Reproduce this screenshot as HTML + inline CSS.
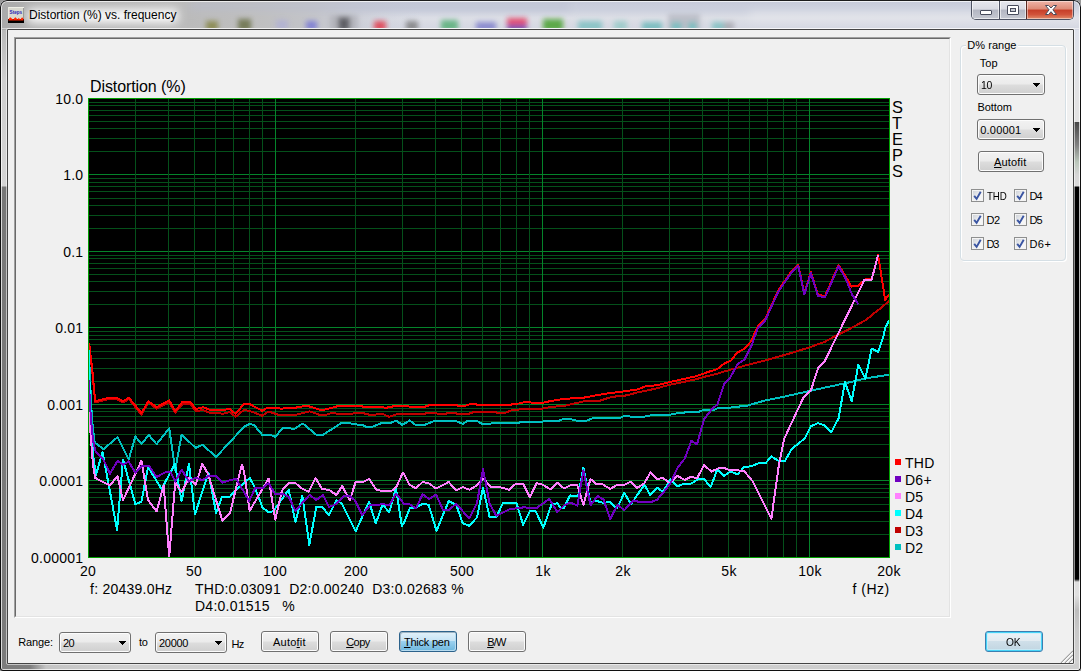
<!DOCTYPE html>
<html><head><meta charset="utf-8"><title>Distortion (%) vs. frequency</title>
<style>
html,body{margin:0;padding:0;background:#9a9a9a;}
body{width:1081px;height:671px;position:relative;overflow:hidden;font-family:"Liberation Sans",sans-serif;font-size:12px;color:#000;}
.abs{position:absolute;}
#win{position:absolute;left:0;top:0;width:1081px;height:671px;border-radius:7px 7px 3px 3px;overflow:hidden;background:#c4c4c4;}
#client{position:absolute;left:8px;top:30px;width:1065px;height:633px;background:#f0f0f0;}
.ui{font-family:"Liberation Sans",sans-serif;font-size:12px;letter-spacing:0;white-space:pre;position:absolute;line-height:14px;}
.ui.t{font-size:11px;}
.ar{font-family:"Liberation Sans",sans-serif;font-size:14px;white-space:pre;position:absolute;line-height:16px;color:#000;letter-spacing:0.24px;}
.btn{position:absolute;box-sizing:border-box;border:1px solid #707070;border-radius:3px;background:linear-gradient(#f2f2f2 0%,#ebebeb 48%,#dddddd 52%,#cfcfcf 100%);box-shadow:inset 0 0 0 1px #fcfcfc;text-align:center;font-size:12px;line-height:19px;letter-spacing:-0.2px;}
.btn u{text-decoration:underline;}
.combo{position:absolute;box-sizing:border-box;border:1px solid #707070;border-radius:3px;background:linear-gradient(#f2f2f2 0%,#ebebeb 48%,#dddddd 52%,#cfcfcf 100%);box-shadow:inset 0 0 0 1px #fcfcfc;font-size:12px;line-height:20px;padding-left:4px;letter-spacing:-0.2px;}
.combo:after{content:"";position:absolute;right:4px;top:8px;width:7px;height:4px;background:linear-gradient(#000,#000) 0 0/7px 1px no-repeat,linear-gradient(#000,#000) 1px 1px/5px 1px no-repeat,linear-gradient(#000,#000) 2px 2px/3px 1px no-repeat,linear-gradient(#000,#000) 3px 3px/1px 1px no-repeat;}
.cb{position:absolute;width:13px;height:13px;box-sizing:border-box;border:1px solid #8e8f8f;background:#f4f4f4;}
.cb i{position:absolute;left:1px;top:1px;width:9px;height:9px;background:linear-gradient(135deg,#d0d4da,#f6f6f6 70%);border:0;}
.cb svg{position:absolute;left:-1px;top:-1px;}
</style></head><body>
<div id="win">
 <!-- title bar glass -->
 <svg class="abs" style="left:0;top:0" width="1081" height="30" viewBox="0 0 1081 30">
  <defs>
   <linearGradient id="tbv" x1="0" y1="0" x2="0" y2="1"><stop offset="0" stop-color="#c6cad9"/><stop offset="0.35" stop-color="#cdd1de"/><stop offset="0.6" stop-color="#dddfe6"/><stop offset="1" stop-color="#d3d6e1"/></linearGradient>
   <linearGradient id="tbl" x1="0" y1="0" x2="1" y2="0"><stop offset="0" stop-color="#aaaaaa"/><stop offset="0.1" stop-color="#b2b2b2"/><stop offset="0.6" stop-color="#bfbfbf"/><stop offset="0.75" stop-color="#c2c3c8" stop-opacity="0.95"/><stop offset="1" stop-color="#c8ccd9" stop-opacity="0"/></linearGradient>
   <linearGradient id="tblv" x1="0" y1="0" x2="0" y2="1"><stop offset="0" stop-color="#000" stop-opacity="0.10"/><stop offset="0.3" stop-color="#fff" stop-opacity="0.05"/><stop offset="0.6" stop-color="#fff" stop-opacity="0.25"/><stop offset="1" stop-color="#fff" stop-opacity="0.1"/></linearGradient>
   <filter id="b3" x="-50%" y="-50%" width="200%" height="200%"><feGaussianBlur stdDeviation="2.6"/></filter>
   <filter id="b6" x="-20%" y="-100%" width="140%" height="300%"><feGaussianBlur stdDeviation="5"/></filter>
   <clipPath id="tbclip"><rect x="2" y="2" width="1077" height="26"/></clipPath>
  </defs>
  <rect x="0" y="0" width="1081" height="30" fill="url(#tbv)"/>
  <rect x="0" y="0" width="420" height="30" fill="url(#tbl)"/>
  <g clip-path="url(#tbclip)">
   <g filter="url(#b6)">
    <rect x="190" y="3" width="380" height="6" fill="#b9bdcf" opacity="0.8"/>
    <rect x="28" y="9" width="150" height="14" fill="#fff" opacity="0.95"/>
    <rect x="750" y="12" width="330" height="9" fill="#e6e7ec" opacity="0.7"/>
   </g>
   <g filter="url(#b3)" opacity="0.72">
    <rect x="206" y="21" width="12" height="10" fill="#7d7d30"/>
    <rect x="238" y="19" width="13" height="12" fill="#5c6436"/>
    <rect x="276" y="20" width="12" height="10" fill="#a9a9dc" opacity="0.8"/>
    <rect x="306" y="21" width="11" height="9" fill="#6a6ad8"/>
    <rect x="330" y="15" width="28" height="16" fill="#a0a0a6" opacity="0.7"/>
    <rect x="338" y="17" width="12" height="14" fill="#38383c"/>
    <rect x="374" y="21" width="12" height="10" fill="#e61e32"/>
    <rect x="406" y="21" width="12" height="10" fill="#707070"/>
    <rect x="441" y="20" width="17" height="11" fill="#3fa865"/>
    <rect x="476" y="22" width="20" height="9" fill="#7070c8"/>
    <rect x="507" y="18" width="20" height="7" fill="#e61e46"/>
    <rect x="507" y="25" width="20" height="6" fill="#3c28a0"/>
    <rect x="543" y="19" width="20" height="12" fill="#2f9610"/>
    <rect x="578" y="21" width="24" height="10" fill="#6fbcbc"/>
    <rect x="614" y="21" width="13" height="10" fill="#8cc8c3"/>
    <rect x="642" y="22" width="20" height="9" fill="#5ab4b4"/>
    <rect x="668" y="14" width="32" height="17" fill="#a9abb6" opacity="0.85"/>
    <rect x="671" y="22" width="11" height="9" fill="#5ab4b4"/>
    <rect x="688" y="22" width="9" height="9" fill="#5ab4b4"/>
    <rect x="712" y="22" width="12" height="9" fill="#6fbcbc"/>
    <rect x="724" y="22" width="10" height="9" fill="#a0a0a8"/>
   </g>
  </g>
  <rect x="2" y="28" width="1077" height="1" fill="#fff" opacity="0.5"/>
 </svg>
 <!-- side frames -->
 <div class="abs" id="lf" style="left:0;top:30px;width:8px;height:641px;background:linear-gradient(#bababa 0px,#cfcfcf 50px,#d4d4d4 156px,#787878 157px,#7b7b7b 100%);"></div>
 <div class="abs" id="rf" style="left:1073px;top:30px;width:8px;height:641px;background:linear-gradient(#dfe2eb 0px,#e2e2e4 60px,#e2e2e2 91.5px,#484848 92.5px,#808080 115px,#bac6ba 132px,#d6d6d6 145px,#dadada 156px,#000 157px,#000 549px,#dedede 552px,#e0e0e0 565px,#bdbdbd 580px,#c9c9c9 600px,#d2d2d2 100%);"></div>
 <div class="abs" id="bf" style="left:0;top:663px;width:1081px;height:8px;background:linear-gradient(90deg,#7c7c7c 0px,#7e7e7e 30px,#c4c4c4 46px,#cfcfcf 120px,#cdcdcd 100%);"></div>
 <!-- frame edge lines -->
 <div class="abs" style="left:0;top:0;width:1081px;height:671px;box-sizing:border-box;border:1px solid #101010;border-top-color:#1c1c1c;border-radius:7px 7px 3px 3px;box-shadow:inset 0 0 0 1px rgba(255,255,255,0.72);"></div>
 <!-- inner client border -->
 <div class="abs" style="left:6px;top:28px;width:1069px;height:637px;box-sizing:border-box;border:1px solid rgba(255,255,255,0.55);border-radius:2px;"></div>
 <div class="abs" style="left:7px;top:29px;width:1067px;height:635px;box-sizing:border-box;border:1px solid #444;border-radius:1px;"></div>

 <!-- title icon -->
 <svg class="abs" style="left:8px;top:7px" width="16" height="16" viewBox="0 0 16 16">
  <rect width="16" height="16" fill="#d9d9d0"/>
  <rect width="16" height="1" fill="#efefe6"/><rect width="1" height="16" fill="#e8e8e0"/>
  <rect x="15" y="1" width="1" height="15" fill="#9a9a96"/>
  <rect y="12" width="16" height="4" fill="#000"/>
  <path d="M0.5 12.5 L1 11.5 L2.2 10.2 L3.2 11 L4.2 12 L5.5 12.6 L6.5 11 L7.6 10.2 L8.6 11.6 L9.6 12.6 L10.6 11 L11.6 11.8 L12.5 12.6 L13.6 10.8 L14.6 10.4 L15.5 12 L15.5 13.4 L0.5 13.4Z" fill="#ff2400"/>
  <text x="1.6" y="7.2" font-family="Liberation Sans,sans-serif" font-size="5" font-weight="bold" fill="#2626b4" textLength="12.6" lengthAdjust="spacingAndGlyphs">Steps</text>
 </svg>
 <div class="ui" id="title" style="left:29px;top:8px;letter-spacing:0px;">Distortion (%) vs. frequency</div>

 <!-- caption buttons -->
 <div class="abs" id="capbtns" style="left:971px;top:1px;width:103px;height:19px;box-sizing:border-box;border:1px solid #4d5262;border-top:0;border-radius:0 0 5px 5px;overflow:hidden;background:#ccc;">
   <div class="abs" style="left:0;top:0;width:27px;height:18px;background:linear-gradient(#e6e8ee 0%,#d9dbe3 45%,#b3b6c2 50%,#c6c9d2 100%);box-shadow:inset 0 0 0 1px rgba(255,255,255,0.6);"></div>
   <div class="abs" style="left:27px;top:0;width:1px;height:19px;background:#4d5262;"></div>
   <div class="abs" style="left:28px;top:0;width:26px;height:18px;background:linear-gradient(#e6e8ee 0%,#d9dbe3 45%,#b3b6c2 50%,#c6c9d2 100%);box-shadow:inset 0 0 0 1px rgba(255,255,255,0.6);"></div>
   <div class="abs" style="left:54px;top:0;width:1px;height:19px;background:#5a2a22;"></div>
   <div class="abs" style="left:55px;top:0;width:46px;height:18px;background:linear-gradient(#efb4a8 0%,#dd8a76 45%,#c63e28 50%,#d1533a 75%,#e18c6a 100%);box-shadow:inset 0 0 0 1px rgba(255,255,255,0.45);"></div>
   <div class="abs" style="left:8px;top:9px;width:12px;height:5px;box-sizing:border-box;border:1px solid #474c5c;background:#fff;border-radius:1px;"></div>
   <div class="abs" style="left:35px;top:4px;width:12px;height:10px;box-sizing:border-box;border:1px solid #474c5c;background:#fff;border-radius:1px;"></div>
   <div class="abs" style="left:38px;top:7px;width:6px;height:4px;box-sizing:border-box;border:1px solid #474c5c;background:#c8cad2;"></div>
   <svg class="abs" style="left:72px;top:3px" width="14" height="12" viewBox="0 0 14 12"><path d="M1.5 1.5 L4.6 1.5 L7 4 L9.4 1.5 L12.5 1.5 L8.9 5.8 L12.5 10.5 L9.4 10.5 L7 7.7 L4.6 10.5 L1.5 10.5 L5.1 5.8 Z" fill="#fff" stroke="#474c5c" stroke-width="1" stroke-linejoin="round"/></svg>
 </div>

 <div id="client">
  <!-- chart panel (sunken) : page coords 14..950, 37..617 ; client offset -8,-30 -->
  <div class="abs" style="left:6px;top:7px;width:937px;height:581px;box-sizing:border-box;border:1px solid;border-color:#a0a0a0 #fff #fff #a0a0a0;"></div>
  <div class="abs" style="left:7px;top:8px;width:935px;height:579px;box-sizing:border-box;border:1px solid;border-color:#696969 #e3e3e3 #e3e3e3 #696969;"></div>
 </div>

 <!-- chart SVG in page coords -->
 <svg class="abs" style="left:0;top:0" width="1081" height="671" viewBox="0 0 1081 671">
  <rect x="88" y="98" width="802" height="460" fill="#000"/>
  <g shape-rendering="crispEdges">
<rect x="89" y="102" width="800" height="1" fill="#04501a"/>
<rect x="89" y="105" width="800" height="1" fill="#04501a"/>
<rect x="89" y="110" width="800" height="1" fill="#04501a"/>
<rect x="89" y="115" width="800" height="1" fill="#04501a"/>
<rect x="89" y="121" width="800" height="1" fill="#04501a"/>
<rect x="89" y="128" width="800" height="1" fill="#04501a"/>
<rect x="89" y="138" width="800" height="1" fill="#04501a"/>
<rect x="89" y="151" width="800" height="1" fill="#04501a"/>
<rect x="89" y="178" width="800" height="1" fill="#04501a"/>
<rect x="89" y="182" width="800" height="1" fill="#04501a"/>
<rect x="89" y="186" width="800" height="1" fill="#04501a"/>
<rect x="89" y="191" width="800" height="1" fill="#04501a"/>
<rect x="89" y="198" width="800" height="1" fill="#04501a"/>
<rect x="89" y="205" width="800" height="1" fill="#04501a"/>
<rect x="89" y="215" width="800" height="1" fill="#04501a"/>
<rect x="89" y="228" width="800" height="1" fill="#04501a"/>
<rect x="89" y="255" width="800" height="1" fill="#04501a"/>
<rect x="89" y="258" width="800" height="1" fill="#04501a"/>
<rect x="89" y="263" width="800" height="1" fill="#04501a"/>
<rect x="89" y="268" width="800" height="1" fill="#04501a"/>
<rect x="89" y="274" width="800" height="1" fill="#04501a"/>
<rect x="89" y="281" width="800" height="1" fill="#04501a"/>
<rect x="89" y="291" width="800" height="1" fill="#04501a"/>
<rect x="89" y="304" width="800" height="1" fill="#04501a"/>
<rect x="89" y="331" width="800" height="1" fill="#04501a"/>
<rect x="89" y="335" width="800" height="1" fill="#04501a"/>
<rect x="89" y="339" width="800" height="1" fill="#04501a"/>
<rect x="89" y="344" width="800" height="1" fill="#04501a"/>
<rect x="89" y="351" width="800" height="1" fill="#04501a"/>
<rect x="89" y="358" width="800" height="1" fill="#04501a"/>
<rect x="89" y="368" width="800" height="1" fill="#04501a"/>
<rect x="89" y="381" width="800" height="1" fill="#04501a"/>
<rect x="89" y="408" width="800" height="1" fill="#04501a"/>
<rect x="89" y="411" width="800" height="1" fill="#04501a"/>
<rect x="89" y="416" width="800" height="1" fill="#04501a"/>
<rect x="89" y="421" width="800" height="1" fill="#04501a"/>
<rect x="89" y="427" width="800" height="1" fill="#04501a"/>
<rect x="89" y="434" width="800" height="1" fill="#04501a"/>
<rect x="89" y="444" width="800" height="1" fill="#04501a"/>
<rect x="89" y="457" width="800" height="1" fill="#04501a"/>
<rect x="89" y="484" width="800" height="1" fill="#04501a"/>
<rect x="89" y="488" width="800" height="1" fill="#04501a"/>
<rect x="89" y="492" width="800" height="1" fill="#04501a"/>
<rect x="89" y="497" width="800" height="1" fill="#04501a"/>
<rect x="89" y="504" width="800" height="1" fill="#04501a"/>
<rect x="89" y="511" width="800" height="1" fill="#04501a"/>
<rect x="89" y="521" width="800" height="1" fill="#04501a"/>
<rect x="89" y="534" width="800" height="1" fill="#04501a"/>
<rect x="89" y="174" width="800" height="1" fill="#04842a"/>
<rect x="89" y="251" width="800" height="1" fill="#04842a"/>
<rect x="89" y="327" width="800" height="1" fill="#04842a"/>
<rect x="89" y="404" width="800" height="1" fill="#04842a"/>
<rect x="89" y="480" width="800" height="1" fill="#04842a"/>
<rect x="135" y="99" width="1" height="458" fill="#04501a"/>
<rect x="168" y="99" width="1" height="458" fill="#04501a"/>
<rect x="194" y="99" width="1" height="458" fill="#04501a"/>
<rect x="215" y="99" width="1" height="458" fill="#04501a"/>
<rect x="233" y="99" width="1" height="458" fill="#04501a"/>
<rect x="249" y="99" width="1" height="458" fill="#04501a"/>
<rect x="262" y="99" width="1" height="458" fill="#04501a"/>
<rect x="355" y="99" width="1" height="458" fill="#04501a"/>
<rect x="402" y="99" width="1" height="458" fill="#04501a"/>
<rect x="435" y="99" width="1" height="458" fill="#04501a"/>
<rect x="461" y="99" width="1" height="458" fill="#04501a"/>
<rect x="482" y="99" width="1" height="458" fill="#04501a"/>
<rect x="500" y="99" width="1" height="458" fill="#04501a"/>
<rect x="516" y="99" width="1" height="458" fill="#04501a"/>
<rect x="529" y="99" width="1" height="458" fill="#04501a"/>
<rect x="622" y="99" width="1" height="458" fill="#04501a"/>
<rect x="669" y="99" width="1" height="458" fill="#04501a"/>
<rect x="702" y="99" width="1" height="458" fill="#04501a"/>
<rect x="728" y="99" width="1" height="458" fill="#04501a"/>
<rect x="749" y="99" width="1" height="458" fill="#04501a"/>
<rect x="767" y="99" width="1" height="458" fill="#04501a"/>
<rect x="783" y="99" width="1" height="458" fill="#04501a"/>
<rect x="796" y="99" width="1" height="458" fill="#04501a"/>
<rect x="275" y="99" width="1" height="458" fill="#04842a"/>
<rect x="542" y="99" width="1" height="458" fill="#04842a"/>
<rect x="809" y="99" width="1" height="458" fill="#04842a"/>
  </g>
  <g shape-rendering="crispEdges">
<polyline points="88.7,345.0 90.0,380.0 92.0,420.0 94.7,442.5 103.4,449.2 117.5,437.2 128.7,459.6 135.4,436.5 141.4,443.9 148.8,435.0 156.6,444.2 169.2,428.3 175.2,470.0 181.6,434.6 195.7,448.0 202.4,444.7 216.1,456.9 244.0,426.9 250.0,423.6 254.4,425.4 262.2,434.8 270.1,434.8 275.3,436.9 282.7,428.0 294.7,428.7 302.8,423.5 316.3,434.8 323.0,434.8 341.6,422.9 349.0,422.9 354.2,424.4 361.7,424.7 366.2,426.9 372.1,426.9 381.1,423.2 390.7,422.9 396.0,420.5 401.9,424.7 404.0,423.9 409.7,420.5 415.2,424.7 424.9,424.7 434.5,421.0 456.1,421.0 462.8,423.9 468.1,420.5 476.3,420.5 482.2,423.9 490.4,423.9 491.9,422.9 518.7,422.9 520.2,421.7 542.5,421.7 544.8,420.7 558.9,420.7 564.0,418.8 570.7,419.3 577.4,420.8 586.3,420.8 593.8,417.8 620.6,417.8 625.1,415.5 631.0,416.7 644.4,416.7 653.4,414.8 669.8,414.8 672.8,413.8 683.2,412.9 687.6,411.5 699.6,411.5 702.5,410.3 713.0,410.3 718.9,407.8 724.0,408.4 747.7,405.5 765.1,400.5 787.2,396.0 809.3,391.0 831.4,386.2 850.4,382.1 866.2,378.3 889.1,374.7" fill="none" stroke="#00c0c0" stroke-width="2" stroke-linejoin="round"/>
<polyline points="89.2,345.0 92.2,371.0 95.2,402.0 98.9,401.6 109.3,398.7 116.0,398.7 123.0,402.4 129.0,399.0 141.4,414.6 148.4,402.4 156.6,408.6 169.2,402.2 175.2,412.7 182.3,404.2 190.5,404.2 195.7,411.2 203.2,410.1 210.6,413.1 223.3,413.6 229.3,412.1 235.7,416.8 244.0,409.8 252.9,412.0 262.2,415.8 268.6,411.6 279.0,415.0 294.7,415.0 309.5,411.3 320.0,415.0 325.2,415.0 331.9,412.8 339.3,414.0 351.3,414.0 355.7,412.5 361.7,412.8 370.6,415.0 382.5,414.0 389.3,416.8 397.4,414.0 404.0,414.0 424.9,414.0 426.3,412.8 436.0,412.8 437.5,414.0 445.7,414.0 447.9,412.8 455.4,412.8 457.6,414.0 468.8,414.0 471.0,412.8 477.0,411.6 494.9,411.6 497.1,412.8 505.3,412.8 511.3,410.5 517.2,409.8 523.2,408.6 542.5,408.6 551.5,406.8 564.0,405.9 583.4,401.4 599.8,400.7 611.7,396.9 626.6,395.4 637.0,392.5 647.4,390.5 657.9,388.0 669.8,384.7 683.2,382.0 696.6,379.1 707.0,376.1 717.4,373.8 724.0,371.6 744.5,365.7 765.1,360.5 787.2,354.2 809.3,347.4 825.1,341.7 834.6,336.4 850.4,328.5 866.2,319.8 875.7,311.9 882.0,307.2 889.1,300.8" fill="none" stroke="#c00000" stroke-width="2" stroke-linejoin="round"/>
<polyline points="89.2,343.0 90.7,357.0 92.2,369.0 93.7,385.5 95.2,401.0 98.9,400.4 109.3,397.5 116.0,397.5 123.0,401.2 129.0,397.8 141.4,413.1 148.4,401.2 156.6,407.2 169.2,400.4 175.2,411.2 182.3,401.9 190.5,401.9 195.7,409.1 203.2,407.2 210.6,410.1 223.3,410.1 229.3,408.6 235.7,413.9 244.0,403.8 249.2,403.8 262.2,410.8 267.8,407.6 281.2,408.6 296.1,407.6 306.6,405.6 320.0,409.8 325.2,409.5 337.9,406.1 361.7,406.1 363.2,406.8 387.0,407.6 394.5,406.1 404.0,406.1 412.9,406.8 424.9,406.8 430.8,404.6 456.1,404.6 457.6,405.6 465.8,405.6 471.0,403.8 475.5,403.8 477.0,404.9 510.5,404.9 512.8,403.8 518.7,403.5 524.7,402.0 529.9,402.0 531.4,402.8 542.5,402.8 551.5,400.9 564.0,398.9 583.4,397.7 604.2,393.9 623.6,391.4 637.0,389.5 645.2,386.5 657.9,385.0 669.8,382.0 683.2,379.1 696.6,376.1 707.0,372.3 717.4,369.1 724.0,363.7 731.1,360.5 736.6,353.1 744.5,348.6 750.9,341.5 758.0,326.1 765.1,319.0 778.5,290.1 790.4,272.7 798.3,265.0 804.3,293.4 810.9,272.1 818.0,295.0 825.1,295.9 838.6,265.0 845.7,276.3 851.2,286.6 858.3,285.8 865.4,279.2 871.7,279.2 878.1,255.0 885.2,300.0 889.1,294.5" fill="none" stroke="#ff0000" stroke-width="2" stroke-linejoin="round"/>
<polyline points="88.7,350.0 90.0,400.0 93.0,455.0 95.9,474.9 102.6,452.1 117.1,530.0 123.0,459.6 135.4,504.2 141.4,501.7 148.1,467.0 161.5,489.0 174.9,464.0 181.6,501.0 189.0,463.7 195.0,514.4 208.4,472.7 216.1,512.9 221.8,497.2 230.0,496.5 236.0,489.5 244.0,483.2 249.7,477.9 255.2,488.3 262.6,507.7 268.6,512.1 273.1,511.4 288.7,489.8 295.4,521.8 302.4,495.8 309.3,544.9 316.3,506.9 322.2,506.9 328.9,515.1 336.4,500.5 341.6,503.2 355.7,531.2 369.1,501.7 375.8,523.3 382.5,504.7 389.3,512.1 396.0,488.3 401.9,526.3 404.0,522.6 410.0,507.7 415.9,507.7 422.6,503.9 428.6,504.7 436.5,530.8 448.7,501.0 456.1,504.7 462.8,523.3 469.3,525.8 477.0,517.4 483.0,487.6 489.7,517.4 496.4,517.4 503.1,502.5 516.5,503.2 523.2,524.8 529.9,511.4 535.8,511.4 543.3,527.8 551.5,504.7 557.4,503.2 560.4,507.7 564.0,507.8 570.0,495.4 578.2,496.3 583.4,467.6 590.5,502.6 596.0,500.8 603.5,502.9 610.2,501.8 616.9,508.5 624.3,492.9 631.0,504.1 644.4,484.7 650.4,495.1 657.1,487.7 663.1,491.8 670.5,479.0 677.2,486.5 683.2,483.9 691.4,483.5 697.3,479.5 704.0,479.0 710.7,486.9 717.4,469.1 724.0,475.9 730.3,471.5 737.4,474.3 744.5,466.8 750.9,466.4 759.6,462.8 765.9,462.8 771.4,456.5 779.3,461.2 784.8,461.2 791.9,448.6 798.3,443.9 805.4,437.5 810.9,426.1 818.0,423.2 825.1,425.7 831.4,432.1 838.6,418.2 844.9,382.1 851.7,401.1 858.3,364.8 865.4,378.7 871.7,348.6 878.1,351.8 883.6,336.0 885.2,327.7 889.1,320.6" fill="none" stroke="#00ffff" stroke-width="2" stroke-linejoin="round"/>
<polyline points="88.7,405.0 91.0,440.0 93.0,465.0 95.2,477.9 103.4,482.3 110.1,485.3 117.5,476.1 123.0,500.2 141.4,460.7 148.1,500.2 156.6,511.4 163.7,485.3 169.2,556.8 175.2,482.3 181.6,492.0 189.0,477.9 195.7,484.6 202.4,463.7 208.4,474.9 222.5,521.1 230.0,512.9 241.9,464.5 244.0,471.9 249.7,510.7 268.6,478.6 275.3,519.6 282.0,490.5 288.7,483.1 295.4,483.1 302.8,489.1 308.8,491.6 315.5,477.9 322.2,489.1 328.9,489.8 336.4,495.0 342.3,486.1 349.8,500.5 355.7,481.6 363.2,482.0 369.1,479.1 376.6,489.8 383.3,491.3 391.5,491.0 396.0,487.6 402.7,473.1 404.0,474.2 409.2,484.6 415.9,488.3 422.6,482.0 428.6,483.1 436.0,488.6 448.7,482.0 456.1,490.5 462.8,487.1 469.5,489.8 477.0,485.3 483.7,478.6 490.4,486.8 502.3,487.6 509.0,489.8 515.7,483.8 523.2,483.8 529.9,497.2 536.6,483.1 542.5,484.6 550.7,489.5 557.4,482.6 564.0,488.4 570.0,485.4 577.4,485.4 583.4,504.8 590.5,479.0 596.8,484.4 602.7,484.4 610.2,488.9 616.1,485.4 623.6,485.4 630.3,481.7 637.0,488.0 644.4,483.2 650.4,472.5 657.1,479.0 663.1,478.0 669.8,483.2 677.2,475.8 684.7,479.9 690.6,476.9 697.3,478.0 704.0,465.0 711.5,471.6 718.9,468.0 724.0,468.0 730.3,470.2 743.8,470.7 752.4,481.0 771.4,518.6 778.5,467.6 784.0,439.1 803.0,398.4 810.9,390.5 818.0,368.4 825.1,360.5 837.0,336.0 864.6,279.5 871.7,279.5 878.1,255.0" fill="none" stroke="#ff80ff" stroke-width="2" stroke-linejoin="round"/>
<polyline points="88.7,380.0 91.0,420.0 93.0,440.0 95.2,450.7 103.4,459.6 110.1,473.7 117.5,460.8 123.0,464.8 128.7,461.4 135.4,473.0 142.1,465.5 148.8,465.5 156.6,477.2 164.4,472.6 170.4,472.0 175.2,481.6 181.6,469.7 189.0,481.6 195.7,477.5 202.4,480.4 208.4,476.0 215.8,476.0 222.5,482.7 229.3,480.4 236.0,478.7 244.0,492.0 249.2,501.0 255.2,488.0 262.6,488.0 268.6,483.1 275.3,494.3 283.5,494.3 288.7,496.9 295.4,510.7 309.5,495.0 316.3,499.9 323.0,495.0 328.9,506.9 334.9,504.7 343.1,496.5 349.8,495.8 355.0,500.5 362.4,515.1 369.9,505.4 376.6,505.4 382.5,503.9 389.3,505.4 396.0,493.5 404.0,503.9 409.2,503.9 415.9,508.4 422.6,494.3 429.3,499.0 436.0,494.6 443.0,509.9 448.7,509.9 456.1,503.9 469.3,518.4 477.0,503.2 483.0,468.9 489.7,503.9 496.4,515.9 509.8,509.2 523.2,507.4 536.6,508.0 549.3,499.0 557.4,512.1 564.0,505.5 570.0,502.6 577.4,505.5 583.4,470.5 590.5,505.3 597.5,495.9 603.5,499.6 610.2,519.0 617.6,504.8 624.3,510.3 633.3,500.3 638.5,501.8 651.9,501.8 657.1,499.6 663.1,492.9 670.5,483.2 677.2,468.3 684.7,458.6 691.4,440.7 697.0,444.5 704.0,419.3 711.5,409.6 717.4,404.4 724.0,384.2 730.3,377.4 737.4,364.4 744.5,359.4 750.9,347.1 758.0,327.7 765.1,320.6 778.5,291.4 790.4,274.0 798.3,266.1 804.3,294.5 810.9,273.2 818.0,296.1 825.1,297.2 838.6,266.1 845.7,278.7 852.0,294.5 858.3,304.0" fill="none" stroke="#7000c0" stroke-width="2" stroke-linejoin="round"/>
  </g>
  <g shape-rendering="crispEdges" fill="#00a000">
   <rect x="88" y="98" width="802" height="1"/><rect x="88" y="557" width="802" height="1"/>
   <rect x="88" y="98" width="1" height="460"/><rect x="889" y="98" width="1" height="460"/>
  </g>
  <g shape-rendering="crispEdges">
   <rect x="895" y="459" width="6" height="6" fill="#ff0000"/>
   <rect x="895" y="476" width="6" height="6" fill="#7000c0"/>
   <rect x="895" y="493" width="6" height="6" fill="#ff80ff"/>
   <rect x="895" y="510" width="6" height="6" fill="#00ffff"/>
   <rect x="895" y="527" width="6" height="6" fill="#c00000"/>
   <rect x="895" y="544" width="6" height="6" fill="#00c0c0"/>
  </g>
 </svg>

 <!-- chart texts -->
 <div class="ar" id="ttl" style="left:90px;top:78px;font-size:16px;line-height:18px;letter-spacing:-0.09px;">Distortion (%)</div>
 <div class="ar yl" style="left:19.4px;width:64px;text-align:right;top:91px;">10.0</div>
 <div class="ar yl" style="left:19.4px;width:64px;text-align:right;top:167px;">1.0</div>
 <div class="ar yl" style="left:19.4px;width:64px;text-align:right;top:244px;">0.1</div>
 <div class="ar yl" style="left:19.4px;width:64px;text-align:right;top:320px;">0.01</div>
 <div class="ar yl" style="left:19.4px;width:64px;text-align:right;top:397px;">0.001</div>
 <div class="ar yl" style="left:19.4px;width:64px;text-align:right;top:473px;">0.0001</div>
 <div class="ar yl" style="left:19.4px;width:64px;text-align:right;top:550px;">0.00001</div>

 <div class="ar xl" style="left:58px;width:60px;text-align:center;top:563px;">20</div>
 <div class="ar xl" style="left:164px;width:60px;text-align:center;top:563px;">50</div>
 <div class="ar xl" style="left:245px;width:60px;text-align:center;top:563px;">100</div>
 <div class="ar xl" style="left:326px;width:60px;text-align:center;top:563px;">200</div>
 <div class="ar xl" style="left:432px;width:60px;text-align:center;top:563px;">500</div>
 <div class="ar xl" style="left:513px;width:60px;text-align:center;top:563px;">1k</div>
 <div class="ar xl" style="left:593px;width:60px;text-align:center;top:563px;">2k</div>
 <div class="ar xl" style="left:699px;width:60px;text-align:center;top:563px;">5k</div>
 <div class="ar xl" style="left:780px;width:60px;text-align:center;top:563px;">10k</div>
 <div class="ar xl" style="left:859px;width:60px;text-align:center;top:563px;">20k</div>
 <div class="ar" id="fhz" style="left:852.6px;top:581px;letter-spacing:0.45px;">f (Hz)</div>
 <div class="ar" id="st1" style="left:90px;top:581px;">f: 20439.0Hz</div>
 <div class="ar" id="st2" style="left:195px;top:581px;">THD:0.03091  D2:0.00240  D3:0.02683 %</div>
 <div class="ar" id="st3" style="left:195px;top:598px;">D4:0.01515   %</div>

 <div class="ar" style="left:892px;top:99px;font-size:16.4px;line-height:16px;">S</div>
 <div class="ar" style="left:892px;top:115px;font-size:16.4px;line-height:16px;">T</div>
 <div class="ar" style="left:892px;top:131px;font-size:16.4px;line-height:16px;">E</div>
 <div class="ar" style="left:892px;top:147px;font-size:16.4px;line-height:16px;">P</div>
 <div class="ar" style="left:892px;top:163px;font-size:16.4px;line-height:16px;">S</div>

 <div class="ar lg" style="left:905px;top:455px;">THD</div>
 <div class="ar lg" style="left:905px;top:472px;">D6+</div>
 <div class="ar lg" style="left:905px;top:489px;">D5</div>
 <div class="ar lg" style="left:905px;top:506px;">D4</div>
 <div class="ar lg" style="left:905px;top:523px;">D3</div>
 <div class="ar lg" style="left:905px;top:540px;">D2</div>

<div class="abs" style="left:960px;top:45px;width:106px;height:216px;box-sizing:border-box;border:1px solid #d5dfe5;border-radius:4px;box-shadow:inset 1px 1px 0 #fff, 1px 1px 0 #fff;"></div>
<div class="abs" style="left:966px;top:40px;width:52px;height:12px;background:#f0f0f0;"></div>
<div class="combo" style="left:977px;top:74px;width:68px;height:21px;"></div>
<div class="combo" style="left:977px;top:119px;width:68px;height:21px;"></div>
<div class="combo" style="left:59px;top:632px;width:72px;height:21px;"></div>
<div class="combo" style="left:155px;top:632px;width:72px;height:21px;"></div>
<div class="btn" style="left:978px;top:151px;width:66px;height:21px;"></div>
<div class="btn" style="left:261px;top:631px;width:58px;height:21px;"></div>
<div class="btn" style="left:330px;top:631px;width:58px;height:21px;"></div>
<div class="btn" style="left:468px;top:631px;width:58px;height:21px;"></div>
<div class="btn" style="left:399px;top:631px;width:58px;height:21px;border-color:#2c628b;background:linear-gradient(#e2f1fa 0%,#c6e4f5 45%,#9ad0ee 50%,#6db7de 100%);box-shadow:inset 1px 1px 0 0 #9fb4c2, inset -1px -1px 0 0 #b7dbef;"></div>
<div class="btn" style="left:985px;top:631px;width:58px;height:21px;border-color:#3c7fb1;box-shadow:inset 0 0 0 1px #46d4f8, inset 0 0 0 2px rgba(200,240,252,0.7);background:linear-gradient(#eef3f7 0%,#e2ebf1 45%,#cfdfe9 50%,#c1d5e1 100%);"></div>
<div class="cb" style="left:971px;top:189px;"><i></i><svg width="13" height="13" viewBox="0 0 13 13"><path d="M3.2 6.9 L5.6 9.9 L9.7 2.7" fill="none" stroke="#3a55a2" stroke-width="1.9"/></svg></div>
<div class="cb" style="left:971px;top:213px;"><i></i><svg width="13" height="13" viewBox="0 0 13 13"><path d="M3.2 6.9 L5.6 9.9 L9.7 2.7" fill="none" stroke="#3a55a2" stroke-width="1.9"/></svg></div>
<div class="cb" style="left:971px;top:237px;"><i></i><svg width="13" height="13" viewBox="0 0 13 13"><path d="M3.2 6.9 L5.6 9.9 L9.7 2.7" fill="none" stroke="#3a55a2" stroke-width="1.9"/></svg></div>
<div class="cb" style="left:1014px;top:189px;"><i></i><svg width="13" height="13" viewBox="0 0 13 13"><path d="M3.2 6.9 L5.6 9.9 L9.7 2.7" fill="none" stroke="#3a55a2" stroke-width="1.9"/></svg></div>
<div class="cb" style="left:1014px;top:213px;"><i></i><svg width="13" height="13" viewBox="0 0 13 13"><path d="M3.2 6.9 L5.6 9.9 L9.7 2.7" fill="none" stroke="#3a55a2" stroke-width="1.9"/></svg></div>
<div class="cb" style="left:1014px;top:237px;"><i></i><svg width="13" height="13" viewBox="0 0 13 13"><path d="M3.2 6.9 L5.6 9.9 L9.7 2.7" fill="none" stroke="#3a55a2" stroke-width="1.9"/></svg></div>
<div class="ui t" id="gbl" style="left:967.32px;top:38px;letter-spacing:0.036px;">D% range</div>
<div class="ui t" id="ltop" style="left:979.82px;top:56px;letter-spacing:0.060px;">Top</div>
<div class="ui t" id="c10" style="left:981.00px;top:78px;letter-spacing:-0.300px;transform:scaleX(0.95);transform-origin:0 0;">10</div>
<div class="ui t" id="lbot" style="left:977.38px;top:100px;letter-spacing:-0.048px;">Bottom</div>
<div class="ui t" id="c00001" style="left:980.32px;top:123px;letter-spacing:0.180px;">0.00001</div>
<div class="ui t" id="bautofit2" style="left:994.06px;top:155px;letter-spacing:0.160px;"><u>A</u>utofit</div>
<div class="ui t" id="kTHD" style="left:987.00px;top:189px;letter-spacing:-0.100px;transform:scaleX(0.885);transform-origin:0 0;">THD</div>
<div class="ui t" id="kD4" style="left:1029.38px;top:189px;letter-spacing:-0.720px;">D4</div>
<div class="ui t" id="kD2" style="left:986.38px;top:213px;letter-spacing:-0.360px;">D2</div>
<div class="ui t" id="kD5" style="left:1029.38px;top:213px;letter-spacing:-0.840px;">D5</div>
<div class="ui t" id="kD3" style="left:986.38px;top:237px;letter-spacing:-1.020px;">D3</div>
<div class="ui t" id="kD6" style="left:1029.38px;top:237px;letter-spacing:0.540px;">D6+</div>
<div class="ui t" id="lrange" style="left:18.32px;top:635px;letter-spacing:-0.168px;">Range:</div>
<div class="ui t" id="c20" style="left:62.94px;top:636px;letter-spacing:-0.600px;">20</div>
<div class="ui t" id="lto" style="left:138.94px;top:635px;letter-spacing:-0.360px;">to</div>
<div class="ui t" id="c20000" style="left:158.94px;top:636px;letter-spacing:-0.270px;">20000</div>
<div class="ui t" id="lhz" style="left:231.38px;top:637px;letter-spacing:-0.600px;">Hz</div>
<div class="ui t" id="bautofit" style="left:273.06px;top:635px;letter-spacing:0.220px;">Auto<u>f</u>it</div>
<div class="ui t" id="bcopy" style="left:346.18px;top:635px;letter-spacing:-0.520px;"><u>C</u>opy</div>
<div class="ui t" id="bthick" style="left:403.94px;top:635px;letter-spacing:-0.225px;"><u>T</u>hick pen</div>
<div class="ui t" id="bbw" style="left:487.18px;top:635px;letter-spacing:-0.840px;"><u>B</u>/W</div>
<div class="ui t" id="bok" style="left:1006.30px;top:635px;letter-spacing:-0.200px;transform:scaleX(0.93);transform-origin:0 0;">OK</div>
 <!-- size grip -->
 <svg class="abs" style="left:1060px;top:650px" width="13" height="13" viewBox="0 0 13 13" shape-rendering="auto"><path d="M13 1 L1 13 M13 5 L5 13 M13 9 L9 13" stroke="#a0a0a0" stroke-width="1.2"/><path d="M13 2.2 L2.2 13 M13 6.2 L6.2 13 M13 10.2 L10.2 13" stroke="#fff" stroke-width="1"/></svg>
</div>
</body></html>
